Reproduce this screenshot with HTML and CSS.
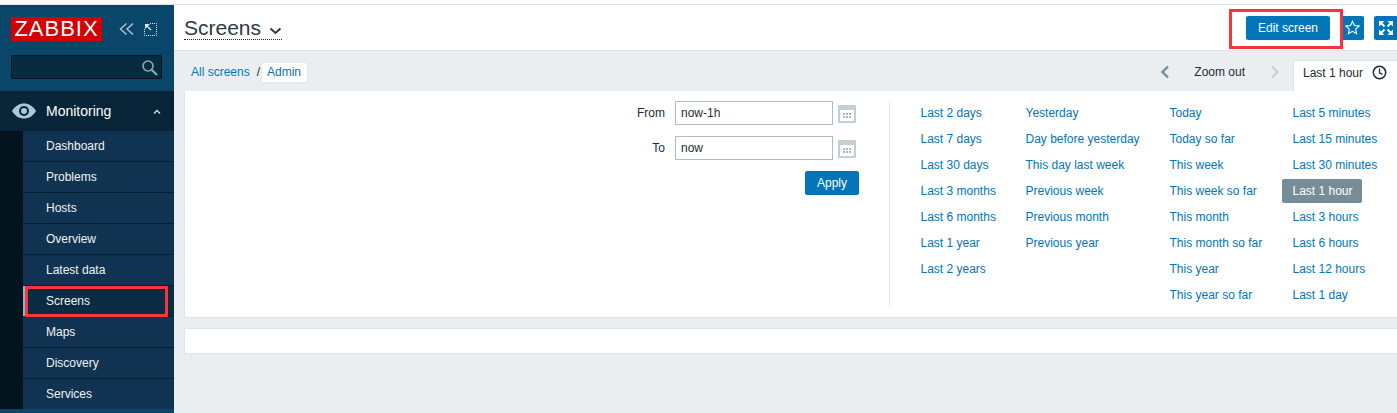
FILE: index.html
```html
<!DOCTYPE html>
<html lang="en">
<head>
    <meta charset="UTF-8">
    <title>Screens</title>
    <link rel="stylesheet" href="styles.css">
</head>
<body>
    <div class="page">
        <!-- sidebar -->
        <aside class="sidebar">
            <div class="brand">
                <span class="logo">ZABBIX</span>
                <svg class="brand-icon" width="16" height="14" viewBox="0 0 16 14" fill="none" stroke="#a9c0cf" stroke-width="1.5">
                    <path d="M7.500 1.500 1.500 7l6 5.500M14 1.500 8 7l6 5.500"/>
                </svg>
                <svg class="brand-icon" width="13" height="13" viewBox="0 0 13 13" fill="none" stroke="#dfe8ee">
                    <path d="M6 .5h6.500v12H.5V6" stroke-dasharray="1 1"/>
                    <path d="M1 1h5L1 6z" fill="#dfe8ee" stroke="none"/>
                    <path d="M3 3l4 4" stroke-width="1.500"/>
                </svg>
            </div>
            <div class="search">
                <svg width="17" height="17" viewBox="0 0 17 17" fill="none" stroke="#8fa6b5" stroke-width="1.600">
                    <circle cx="7" cy="7" r="5"/>
                    <path d="M10.500 10.500 16 16" stroke-width="2.200"/>
                </svg>
            </div>
            <div class="menu-head">
                <svg width="24" height="16" viewBox="0 0 24 16">
                    <path d="M0 8C3 3 7 .5 12 .5S21 3 24 8c-3 5-7 7.500-12 7.500S3 13 0 8z" fill="#a9c8da"/>
                    <circle cx="12" cy="8" r="5" fill="#072438"/>
                    <circle cx="12" cy="8" r="3" fill="#a9c8da"/>
                </svg>
                <span class="menu-title">Monitoring</span>
                <svg class="menu-caret" width="8" height="5" viewBox="0 0 8 5" fill="none" stroke="#d5e0e7" stroke-width="1.300">
                    <path d="M1 4.500 4 1.500l3 3"/>
                </svg>
            </div>
            <ul class="submenu">
                <li>Dashboard</li>
                <li>Problems</li>
                <li>Hosts</li>
                <li>Overview</li>
                <li>Latest data</li>
                <li class="current">Screens<span class="mark-menu"></span></li>
                <li>Maps</li>
                <li>Discovery</li>
                <li>Services</li>
            </ul>
        </aside>

        <main class="content">
            <header class="header">
                <h1 class="title">Screens <svg width="13" height="8" viewBox="0 0 13 8" fill="none" stroke="#2b3a44" stroke-width="2"><path d="M1.500 1.500 6.500 6l5-4.500"/></svg></h1>
                <div class="controls">
                    <button class="btn btn-edit" type="button">Edit screen</button>
                    <button class="btn-icon" type="button">
                        <svg width="15" height="15" viewBox="0 0 15 15" fill="none" stroke="#fff" stroke-width="1.100"><path d="M7.500 1.200 9.400 5.500l4.700.5-3.500 3.100 1 4.600-4.100-2.400-4.100 2.400 1-4.600L.9 6l4.700-.5z"/></svg>
                    </button>
                    <button class="btn-icon" type="button">
                        <svg width="14" height="14" viewBox="0 0 14 14" fill="#fff" stroke="#fff" stroke-width="1.800"><path d="M0 0h5.500L0 5.500zM14 0v5.500L8.500 0zM0 14V8.500L5.500 14zM14 14H8.500L14 8.500z" stroke="none"/><path d="M2.500 2.500 5.500 5.500M11.500 2.500 8.500 5.500M2.500 11.500l3-3M11.500 11.500l-3-3"/></svg>
                    </button>
                    <span class="mark-edit"></span>
                </div>
            </header>

            <div class="tabs">
                <div class="crumbs">
                    <a class="link">All screens</a>
                    <span class="crumb-sep">/</span>
                    <a class="link crumb-current">Admin</a>
                </div>
                <div class="zoom-nav">
                    <svg width="10" height="14" viewBox="0 0 10 14" fill="none" stroke="#768d99" stroke-width="2.400"><path d="M8 1.500 2.500 7 8 12.500"/></svg>
                    <span class="zoom-label">Zoom out</span>
                    <svg width="10" height="14" viewBox="0 0 10 14" fill="none" stroke="#c5d0d6" stroke-width="2.400"><path d="M2 1.500 7.500 7 2 12.500"/></svg>
                </div>
                <div class="time-tab">
                    Last 1 hour
                    <svg width="15" height="15" viewBox="0 0 15 15" fill="none" stroke="#1f2c33" stroke-width="1.500"><circle cx="7.500" cy="7.500" r="6.200"/><path d="M7.500 3.500v4.300l3 1.500" stroke-width="1.300"/></svg>
                </div>
            </div>

            <section class="panel filter">
                <form class="range-form">
                    <label class="range-label">From</label>
                    <input class="range-input" type="text" value="now-1h">
                    <svg class="cal" width="18" height="18" viewBox="0 0 18 18"><path d="M1 0h16a1 1 0 0 1 1 1v16a1 1 0 0 1-1 1H1a1 1 0 0 1-1-1V1a1 1 0 0 1 1-1z" fill="#c3ced5"/><path d="M2 5h14v11H2z" fill="#fff"/><path d="M5 8h2v2H5zM8 8h2v2H8zM11 8h2v2h-2zM5 11h2v2H5zM8 11h2v2H8zM11 11h2v2h-2z" fill="#a9b7c0"/></svg>
                    <label class="range-label">To</label>
                    <input class="range-input" type="text" value="now">
                    <svg class="cal" width="18" height="18" viewBox="0 0 18 18"><path d="M1 0h16a1 1 0 0 1 1 1v16a1 1 0 0 1-1 1H1a1 1 0 0 1-1-1V1a1 1 0 0 1 1-1z" fill="#c3ced5"/><path d="M2 5h14v11H2z" fill="#fff"/><path d="M5 8h2v2H5zM8 8h2v2H8zM11 8h2v2h-2zM5 11h2v2H5zM8 11h2v2H8zM11 11h2v2h-2z" fill="#a9b7c0"/></svg>
                    <button class="btn btn-apply" type="button">Apply</button>
                </form>
                <div class="quick">
                    <ul class="quick-col col-a">
                        <li><a class="link">Last 2 days</a></li>
                        <li><a class="link">Last 7 days</a></li>
                        <li><a class="link">Last 30 days</a></li>
                        <li><a class="link">Last 3 months</a></li>
                        <li><a class="link">Last 6 months</a></li>
                        <li><a class="link">Last 1 year</a></li>
                        <li><a class="link">Last 2 years</a></li>
                    </ul>
                    <ul class="quick-col col-b">
                        <li><a class="link">Yesterday</a></li>
                        <li><a class="link">Day before yesterday</a></li>
                        <li><a class="link">This day last week</a></li>
                        <li><a class="link">Previous week</a></li>
                        <li><a class="link">Previous month</a></li>
                        <li><a class="link">Previous year</a></li>
                    </ul>
                    <ul class="quick-col col-c">
                        <li><a class="link">Today</a></li>
                        <li><a class="link">Today so far</a></li>
                        <li><a class="link">This week</a></li>
                        <li><a class="link">This week so far</a></li>
                        <li><a class="link">This month</a></li>
                        <li><a class="link">This month so far</a></li>
                        <li><a class="link">This year</a></li>
                        <li><a class="link">This year so far</a></li>
                    </ul>
                    <ul class="quick-col col-d">
                        <li><a class="link">Last 5 minutes</a></li>
                        <li><a class="link">Last 15 minutes</a></li>
                        <li><a class="link">Last 30 minutes</a></li>
                        <li><a class="link selected">Last 1 hour</a></li>
                        <li><a class="link">Last 3 hours</a></li>
                        <li><a class="link">Last 6 hours</a></li>
                        <li><a class="link">Last 12 hours</a></li>
                        <li><a class="link">Last 1 day</a></li>
                    </ul>
                </div>
            </section>

            <section class="panel empty"></section>
        </main>
    </div>
</body>
</html>
```

FILE: styles.css
```css
html, body {
    margin: 0;
    height: 100%;
    overflow: hidden;
}
body {
    font-family: "Liberation Sans", Arial, sans-serif;
    font-size: 12px;
    color: #1f2c33;
    background-color: #fff;
}
.page {
    display: flex;
    height: 408px;
    margin-top: 4px;
    border-top: 1px solid #dfe4e7;
}

/* sidebar */
.sidebar {
    width: 174px;
    flex: none;
    background-color: #0a466a;
}
.brand {
    display: flex;
    align-items: center;
    box-sizing: border-box;
    height: 50px;
    padding: 0 0 2px 11px;
}
.logo {
    width: 91px;
    height: 24px;
    margin-right: 17px;
    background-color: #d40000;
    color: #fff;
    font-size: 22px;
    line-height: 24px;
    text-align: center;
    letter-spacing: 1px;
}
.brand-icon {
    margin-right: 9px;
}
.search {
    display: flex;
    align-items: center;
    justify-content: flex-end;
    width: 151px;
    height: 24px;
    margin-left: 11px;
    padding-right: 3px;
    box-sizing: border-box;
    background-color: #082b40;
    border: 1px solid #04161f;
    border-radius: 2px;
}
.menu-head {
    display: flex;
    align-items: center;
    height: 40px;
    margin-top: 12px;
    padding-left: 12px;
    background-color: #072438;
    color: #fff;
    font-size: 14px;
}
.menu-title {
    margin-left: 10px;
}
.menu-caret {
    margin-left: 42px;
}
.submenu {
    margin: 0;
    padding: 0 0 0 23px;
    list-style: none;
    background-color: #03141e;
}
.submenu li {
    position: relative;
    height: 30px;
    padding-left: 23px;
    line-height: 30px;
    background-color: #0f3350;
    border-bottom: 1px solid #05202f;
    color: #f0f4f6;
}
.submenu li:last-child {
    border-bottom: none;
}
.submenu li.current {
    background-color: #092c42;
    box-shadow: inset 2px 0 0 #7fb6dc;
}
.mark-menu {
    position: absolute;
    left: 2px;
    top: 0;
    width: 137px;
    height: 25px;
    border: 3px solid #f9343c;
}

/* main area */
.content {
    flex: 1;
    min-width: 0;
    background-color: #ebeef0;
}
.header {
    display: flex;
    align-items: center;
    justify-content: space-between;
    height: 45px;
    padding-left: 10px;
    background-color: #fff;
    border-bottom: 1px solid #dfe4e7;
}
.title {
    margin: 0;
    padding-top: 2px;
    font-size: 21px;
    font-weight: normal;
    color: #2b3a44;
    line-height: 22px;
    border-bottom: 1px dotted #1f2c33;
}
.title svg {
    margin-left: 2px;
}
.controls {
    position: relative;
    display: flex;
    align-items: center;
    gap: 10px;
    margin-right: -1px;
}
.mark-edit {
    position: absolute;
    left: -17px;
    top: -7px;
    width: 108px;
    height: 34px;
    border: 3px solid #f9343c;
}
.btn {
    border: none;
    border-radius: 2px;
    background-color: #0275b8;
    color: #fff;
    font-family: inherit;
    font-size: 12px;
    padding: 0;
}
.btn-edit {
    display: block;
    width: 84px;
    height: 24px;
}
.btn-icon {
    display: flex;
    align-items: center;
    justify-content: center;
    width: 24px;
    height: 24px;
    padding: 0;
    border: none;
    border-radius: 2px;
    background-color: #0275b8;
}

/* breadcrumbs and zoom */
.tabs {
    display: flex;
    align-items: center;
    box-sizing: border-box;
    height: 40px;
    padding: 2px 0 0 17px;
}
.link {
    color: #0275b8;
}
.crumbs {
    display: flex;
    align-items: center;
    flex: 1;
}
.crumb-sep {
    margin: 0 1px 0 7px;
    color: #1f2c33;
}
.crumb-current {
    box-sizing: border-box;
    padding: 0 6px 0 5px;
    height: 21px;
    line-height: 19px;
    background-color: #fff;
    border: 1px solid #e5e9eb;
    border-radius: 2px;
}
.zoom-nav {
    display: flex;
    align-items: center;
    margin-right: 13px;
}
.zoom-label {
    margin: 0 25px 0 24px;
}
.time-tab {
    display: flex;
    align-items: center;
    gap: 9px;
    align-self: flex-end;
    box-sizing: border-box;
    width: 110px;
    height: 31px;
    margin-right: -6px;
    padding: 0 0 7px 9px;
    background-color: #fff;
    border: 1px solid #dfe4e7;
    border-bottom: none;
    border-radius: 2px 0 0 0;
}

/* panels */
.panel {
    margin-left: 10px;
    margin-right: -20px;
    background-color: #fff;
    border: 1px solid #dfe4e7;
}
.filter {
    display: flex;
    height: 216px;
    padding-top: 10px;
    border-top: none;
}
.empty {
    height: 24px;
    margin-top: 10px;
}
.range-form {
    display: grid;
    grid-template-columns: 480px 158px 18px;
    grid-auto-rows: 24px;
    row-gap: 11px;
    column-gap: 10px;
    align-items: center;
    align-content: start;
    box-sizing: border-box;
    width: 705px;
    height: 206px;
    padding-right: 30px;
    border-right: 1px solid #dfe4e7;
}
.range-label {
    text-align: right;
}
.range-input {
    width: 158px;
    height: 24px;
    box-sizing: border-box;
    padding: 0 5px;
    border: 1px solid #acbbc4;
    font-family: inherit;
    font-size: 12px;
    color: #1f2c33;
}
.cal {
    margin: 2px 0 0 -5px;
}
.btn-apply {
    grid-column: 1 / 4;
    justify-self: end;
    width: 54px;
    height: 24px;
    margin: -1px 2px 0 0;
}
.quick {
    display: flex;
    margin-left: 30.5px;
}
.quick-col {
    margin: 0;
    padding: 0;
    list-style: none;
}
.quick-col li {
    height: 26px;
    line-height: 24px;
    white-space: nowrap;
}
.col-a {
    width: 105px;
}
.col-b {
    width: 144px;
}
.col-c {
    width: 123px;
}
.selected {
    display: inline-block;
    width: 69px;
    height: 24px;
    margin-left: -11px;
    padding-left: 11px;
    background-color: #768d99;
    border-radius: 2px;
    color: #fff;
}
```
